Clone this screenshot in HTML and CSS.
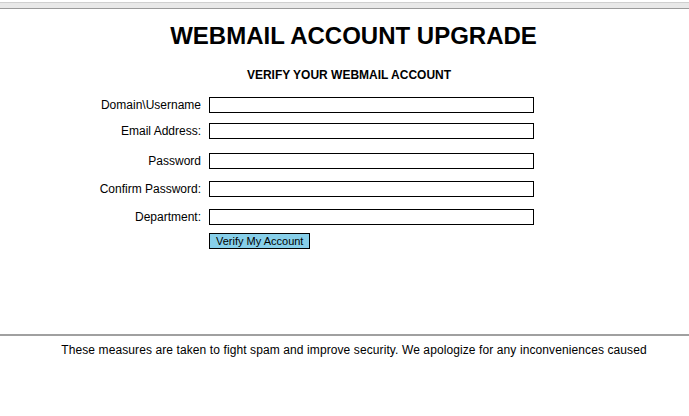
FILE: index.html
```html
<!DOCTYPE html>
<html lang="en">
<head>
  <meta charset="UTF-8">
  <meta name="viewport" content="width=device-width, initial-scale=1">
  <title>Webmail Account Upgrade</title>
  <link rel="stylesheet" href="styles.css">
</head>
<body>

  <div class="topbar"></div>

  <h1>WEBMAIL ACCOUNT UPGRADE</h1>
  <h4>VERIFY YOUR WEBMAIL ACCOUNT</h4>

  <!-- Verify Form -->
  <form class="verify" id="verifyForm">
    <label for="user">Domain\Username</label>
    <input type="text" id="user">

    <label for="email">Email Address:</label>
    <input type="text" id="email">

    <label for="pass">Password</label>
    <input type="password" id="pass">

    <label for="pass2">Confirm Password:</label>
    <input type="password" id="pass2">

    <label for="dept">Department:</label>
    <input type="text" id="dept">

    <span></span>
    <div class="actions"><button type="submit">Verify My Account</button></div>
  </form>

  <hr class="divider">
  <p class="note">These measures are taken to fight spam and improve security. We apologize for any inconveniences caused</p>

</body>
</html>
```

FILE: styles.css
```css
body {
  font-family: "Liberation Sans", Arial, sans-serif;
  background: #fff;
  color: #000;
  margin: 0;
  padding: 0;
}

.topbar {
  margin-top: 2px;
  height: 5px;
  background: #e8e8e8;
  border-top: 1px solid #cfcfcf;
  border-bottom: 1px solid #9a9a9a;
}

h1 {
  text-align: center;
  font-size: 24px;
  margin: 12px 0 0;
  padding-left: 18px;
  line-height: 30px;
}

h4 {
  text-align: center;
  font-size: 12px;
  margin: 17px 0 0;
  padding-left: 9px;
  line-height: 14px;
}

.verify {
  display: grid;
  grid-template-columns: 193px 325px;
  grid-template-rows: 26px 30px 28px 28px 24px 16px;
  column-gap: 8px;
  align-items: start;
  margin-top: 15px;
  padding-left: 8px;
}

.verify label {
  text-align: right;
  font-size: 12px;
  line-height: 16px;
}

.verify input {
  box-sizing: border-box;
  width: 325px;
  height: 16px;
  margin: 0;
  padding: 0 2px;
  border: 1px solid #000;
  font-size: 12px;
}

.actions {
  display: flex;
}

.verify button {
  display: block;
  height: 16px;
  padding: 0 6px;
  margin: 0;
  background: #87cfe9;
  border: 1px solid #000;
  font-family: "Liberation Sans", Arial, sans-serif;
  font-size: 11px;
  line-height: 14px;
  color: #000;
}

.divider {
  margin: 85px 0 0;
  border: 0;
  border-top: 2px solid #a0a0a0;
  height: 0;
}

.note {
  text-align: center;
  font-size: 12px;
  letter-spacing: 0.1px;
  margin: 7px 0 0;
  padding-left: 19px;
}
```
